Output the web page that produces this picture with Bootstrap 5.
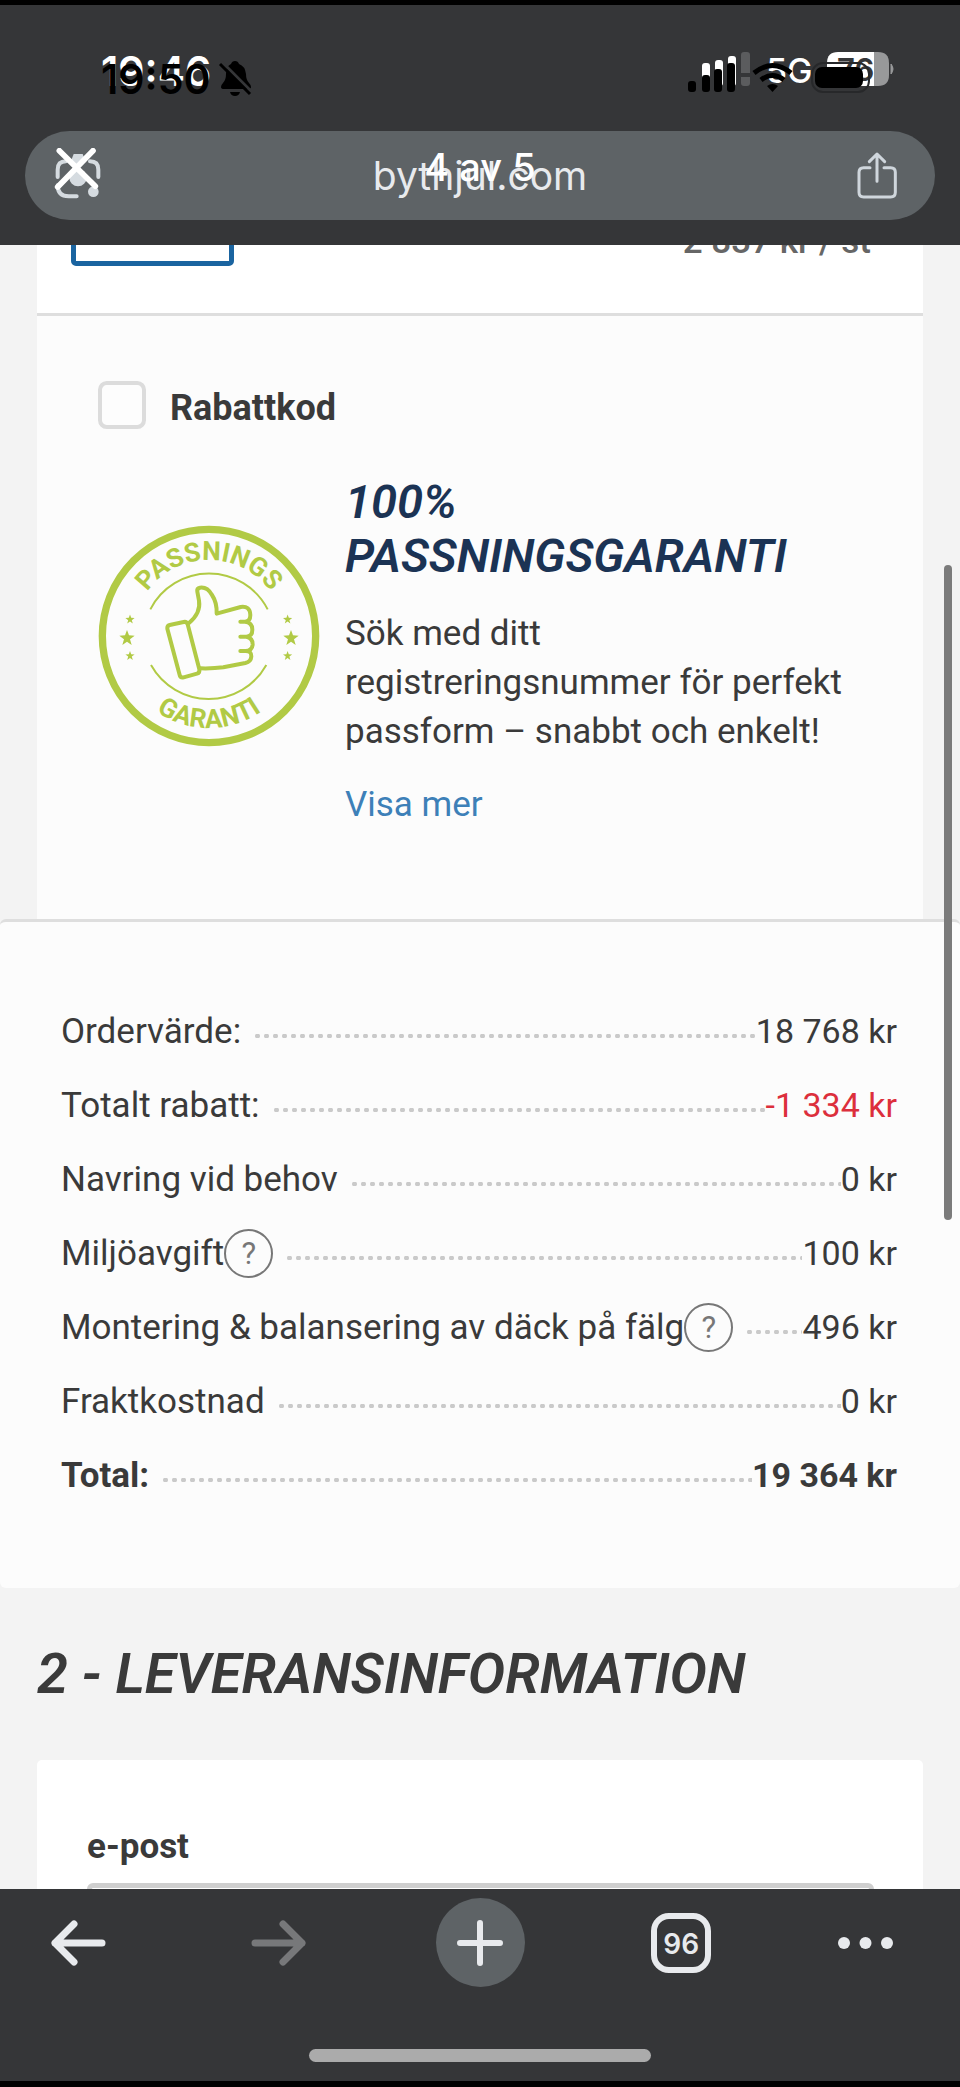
<!DOCTYPE html>
<html lang="sv">
<head>
<meta charset="utf-8">
<meta name="viewport" content="width=device-width, initial-scale=1">
<title>bythjul.com</title>
<link href="https://cdn.jsdelivr.net/npm/bootstrap@5.3.0/dist/css/bootstrap.min.css" rel="stylesheet">
<style>
  body { font-family: Roboto, "Liberation Sans", sans-serif; font-size: 35px; line-height: 49px; color: #3a3a3a; background: #f3f3f3; }
  svg { display: block; flex: none; }
  .chrome { background: #353638; font-family: Inter, "Liberation Sans", sans-serif; }
  .topbar { border-top: 5px solid #000; padding: 42px 25px 25px; }
  .bottombar { border-bottom: 6px solid #000; }
  .stack { display: grid; }
  .stack > * { grid-area: 1 / 1; }
  .status { height: 84px; padding: 0 39px 0 76px; font-size: 41px; line-height: 48px; font-weight: 600; }
  .status-under { color: #fff; }
  .status-over { color: #000; padding-top: 8px; padding-right: 65px; }
  .address { height: 89px; border-radius: 45px; background: #5e6366; color: #e8eaed; font-size: 39px; line-height: 89px; }
  .counter { color: #fff; font-size: 38px; line-height: 72px; font-weight: 500; }
  .plain { background: none; border: 0; padding: 0; color: inherit; }
  .side { margin: 0 37px; }
  .item { background: #fff; height: 71px; padding: 0 52px 0 34px; border-bottom: 3px solid #dedede; overflow: hidden; }
  .qty { width: 163px; height: 60px; margin-top: -39px; border: 5px solid #1a64a0; border-radius: 5px; background: #fff; }
  .price { margin-top: -28px; color: #666; line-height: 49px; font-weight: 500; }
  .offer { background: #fcfcfc; padding: 60px 61px 90px; }
  .tick { width: 48px; height: 48px; margin: 0; border: 4px solid #dcdcdc; border-radius: 10px; flex: none; background-color: #fdfdfd; }
  .gap-label { gap: 24px; }
  .offer label { font-size: 36px; }
  .pitch { gap: 25px; margin-top: 42px; }
  .pitch h3 { font-size: 47px; line-height: 54px; font-weight: 600; font-style: italic; color: #1b3354; margin: 0 0 26px; }
  .pitch p { margin: 0 0 24px; }
  .pitch a { color: #3d80b8; text-decoration: none; }
  .seal { margin-top: 50px; }
  .summary { background: #fcfcfc; border-top: 3px solid #dedede; border-radius: 6px; padding: 72px 63px 76px 61px; margin: 0; }
  .line-row { height: 74px; }
  .line-row dt, .line-row dd { font-weight: inherit; margin: 0; white-space: nowrap; }
  .line-row dd { font-size: 34px; }
  .dots { height: 4px; margin: 10px 0 0 12px; background: radial-gradient(circle, #cacaca 2px, transparent 3px) left center / 9px 4px repeat-x; }
  .help { width: 49px; height: 49px; border: 2px solid #777; border-radius: 50%; color: #777; font-size: 31px; line-height: 45px; font-weight: 400; flex: none; }
  .minus { color: #dc2f3c; }
  h2.step { font-size: 56px; line-height: 68px; font-weight: 600; font-style: italic; margin: 0; padding: 52px 37px; }
  .form-box { background: #fff; border-radius: 5px 5px 0 0; padding: 62px 49px 0 50px; height: 128px; overflow: hidden; }
  .form-box label { display: block; }
  .form-box input { margin-top: 12px; border: 5px solid #cfcfcf; border-radius: 6px; width: 100%; height: 80px; }
  .scrollmark { position: absolute; right: 8px; top: 320px; width: 8px; height: 655px; border-radius: 4px; background: #7b7b7b; }
  .tools { padding: 9px 33px 0; color: #e8eaed; }
  .tool { width: 89px; height: 89px; display: flex; align-items: center; justify-content: center; }
  .tool-new { background: #5e6366; border-radius: 50%; }
  .tabs-count { width: 60px; height: 60px; border: 6px solid #e8eaed; border-radius: 18px; font-size: 28px; line-height: 50px; font-weight: 600; }
  .homebar { width: 342px; height: 13px; border-radius: 7px; background: #ababab; margin: 62px auto 19px; }
</style>
</head>
<body class="d-flex flex-column min-vh-100">

<header class="chrome topbar">
  <div class="stack">
    <div class="status status-under d-flex justify-content-between">
      <span>19:46</span>
      <svg width="196" height="48" viewBox="700 47 196 48">
        <g fill="#fff"><rect x="702" y="63" width="8" height="23" rx="3"/><rect x="715" y="60" width="8" height="26" rx="3"/><rect x="728" y="56" width="8" height="30" rx="3"/></g>
        <path d="M741 55q0-3 3-3h3q3 0 3 3v18h-9zM741 77h9v6q0 3-3 3h-3q-3 0-3-3z" fill="#5b5c5e"/>
        <text x="766" y="83" font-size="34" font-weight="500" fill="#fff">5G</text>
        <path d="M874 52h4q11 0 11 11v12q0 11-11 11h-4z" fill="#98999a"/>
        <path d="M838 52h36v34h-36q-11 0-11-11V63q0-11 11-11z" fill="#fff"/>
        <path d="M891 64q4 5 0 10z" fill="#98999a" stroke="#98999a"/>
        <text x="837" y="81" font-size="31" font-weight="600" fill="#353638">76</text>
      </svg>
    </div>
    <div class="status status-over d-flex justify-content-between">
      <span class="d-flex gap-2"><span>19:50</span>
        <svg width="34" height="48" viewBox="217 54 34 48"><path d="M220 86q0-2 2-4 3-3 3-9 0-8 5-10 1-3 4-3t4 3q6 2 7 10 0 6 3 9 2 2 2 4 0 2-3 2h-24q-3 0-3-2zM229 91h10q-1 4-5 4t-5-4z" fill="#000"/><path d="M221 61l30 30" stroke="#353638" stroke-width="3"/><path d="M219 63l30 30" stroke="#000" stroke-width="3"/></svg>
      </span>
      <svg width="183" height="48" viewBox="687 55 183 48">
        <rect x="688" y="81" width="8" height="11" rx="3"/><rect x="702" y="75" width="8" height="17" rx="3"/><rect x="714" y="69" width="8" height="23" rx="3"/><rect x="727" y="63" width="8" height="29" rx="3"/>
        <g fill="none" stroke="#000" stroke-width="5"><path d="M754 73q18.500-15 37 0M761 80q11.500-9 23 0"/></g><path d="M767 86q5.500-4 11 0l-5.500 6z"/>
        <rect x="812" y="63" width="57" height="29" rx="11" fill="none" stroke="#27282a" stroke-width="2"/><rect x="815" y="67" width="48" height="21" rx="7"/>
      </svg>
    </div>
  </div>
  <div class="address stack">
    <div class="d-flex justify-content-between align-items-center px-4">
      <button class="plain ms-1" type="button" aria-label="Stäng">
        <svg width="50" height="56" viewBox="159 441 150 168" fill="none" stroke-linecap="round"><g stroke="#d5dbe0" stroke-width="12"><path d="M173 528v-22q0-25 25-25M270 481q25 0 25 25v22M173 553q0 33 33 33h24"/></g><circle cx="234" cy="530" r="26" fill="#d5dbe0"/><path d="M213 480l8-21h27l8 21-22 26z" fill="#d5dbe0"/><circle cx="280" cy="572" r="16" fill="#d5dbe0"/><path d="M178 449L286 556M279 449L173 558" stroke="#fff" stroke-width="17"/></svg>
      </button>
      <button class="plain me-2" type="button" aria-label="Dela">
        <svg width="52" height="56" viewBox="1113 445 156 168" fill="none" stroke="#cfd6dc" stroke-width="9" stroke-linecap="round" stroke-linejoin="round"><path d="M1170 504h-19q-14 0-14 14v60q0 14 14 14h81q14 0 14-14v-60q0-14-14-14h-20M1191 545v-82M1168 486l23-23 23 23"/></svg>
      </button>
    </div>
    <span class="mx-auto">bythjul.com</span>
    <span class="counter mx-auto">4 av 5</span>
  </div>
</header>

<main class="flex-grow-1 d-flex flex-column position-relative overflow-hidden">
  <section class="side">
    <div class="item d-flex justify-content-between align-items-start">
      <input class="qty" type="text" aria-label="Antal">
      <span class="price">2 837 kr / st</span>
    </div>
    <div class="offer">
      <div class="d-flex align-items-center gap-label">
        <input class="tick form-check-input" type="checkbox" id="rabatt">
        <label class="fw-bold pt-2" for="rabatt">Rabattkod</label>
      </div>
      <div class="pitch d-flex align-items-start">
        <svg class="seal" width="222" height="222" viewBox="54 72 666 666" fill="none" stroke="#b1ca45" role="img" aria-label="Passningsgaranti">
          <defs>
            <path id="arcTop" d="M159 405a228 228 0 0 1 456 0"/>
            <path id="arcLow" d="M111 405a276 276 0 0 0 552 0"/>
            <path id="star" d="M0-24L6-8 23-7 9 4 14 21 0 11-14 21-9 4-23-7-6-8z"/>
          </defs>
          <circle cx="387" cy="405" r="320" stroke-width="22"/>
          <g fill="#b1ca45" stroke="none" font-family="Roboto, sans-serif" font-weight="700" font-size="79" text-anchor="middle">
            <text><textPath href="#arcTop" startOffset="50%">PASSNINGS</textPath></text>
            <text><textPath href="#arcLow" startOffset="50%">GARANTI</textPath></text>
            <use href="#star" x="141" y="411"/><use href="#star" x="633" y="411"/>
            <g transform="scale(.6)"><use href="#star" x="250" y="592"/><use href="#star" x="250" y="774"/><use href="#star" x="1038" y="592"/><use href="#star" x="1038" y="774"/></g>
          </g>
          <path d="M211 325A198 198 0 0 1 563 325M213 492A198 198 0 0 0 559 492" stroke-width="6"/>
          <g stroke-width="12" stroke-linejoin="round" stroke-linecap="round">
            <path d="M269 372l42-9q9-2 12 7l35 135q2 10-7 13l-40 11q-10 2-12-7L262 383q-1-9 7-11z"/>
            <path d="M327 366q36-30 30-67l-5-27q-2-10 8-12 22-3 36 22 15 22 14 56l72-20q28-4 29 24 0 20-16 20h-14M495 362q22 2 22 24 0 20-18 21h-18M499 407q20 4 19 24-2 18-21 19h-16M497 450q18 0 17 16-1 16-18 20l-66 13q-30 4-69 3"/>
          </g>
        </svg>
        <div>
          <h3>100%<br>PASSNINGSGARANTI</h3>
          <p>Sök med ditt<br>registreringsnummer för perfekt<br>passform – snabbt och enkelt!</p>
          <a href="#">Visa mer</a>
        </div>
      </div>
    </div>
  </section>

  <dl class="summary">
    <div class="line-row d-flex align-items-center"><dt>Ordervärde:</dt><span class="dots flex-grow-1"></span><dd>18 768 kr</dd></div>
    <div class="line-row d-flex align-items-center"><dt>Totalt rabatt:</dt><span class="dots flex-grow-1"></span><dd class="minus">-1 334 kr</dd></div>
    <div class="line-row d-flex align-items-center"><dt>Navring vid behov</dt><span class="dots flex-grow-1"></span><dd>0 kr</dd></div>
    <div class="line-row d-flex align-items-center"><dt>Miljöavgift</dt><button class="plain help" type="button">?</button><span class="dots flex-grow-1"></span><dd>100 kr</dd></div>
    <div class="line-row d-flex align-items-center"><dt>Montering &amp; balansering av däck på fälg</dt><button class="plain help" type="button">?</button><span class="dots flex-grow-1"></span><dd>496 kr</dd></div>
    <div class="line-row d-flex align-items-center"><dt>Fraktkostnad</dt><span class="dots flex-grow-1"></span><dd>0 kr</dd></div>
    <div class="line-row d-flex align-items-center fw-bold"><dt>Total:</dt><span class="dots flex-grow-1"></span><dd>19 364 kr</dd></div>
  </dl>

  <h2 class="step">2 - LEVERANSINFORMATION</h2>
  <form class="side form-box flex-grow-1">
    <label class="fw-bold" for="epost">e-post</label>
    <input type="email" id="epost">
  </form>
  <div class="scrollmark"></div>
</main>

<footer class="chrome bottombar">
  <nav class="tools d-flex justify-content-between">
    <button class="plain tool" type="button" aria-label="Bakåt"><svg width="56" height="48" viewBox="0 0 56 48" fill="none" stroke="currentColor" stroke-width="7" stroke-linecap="round" stroke-linejoin="round"><path d="M24 5L5 24l19 19M5 24h47"/></svg></button>
    <button class="plain tool" type="button" aria-label="Framåt"><svg width="56" height="48" viewBox="0 0 56 48" fill="none" stroke="#77787a" stroke-width="7" stroke-linecap="round" stroke-linejoin="round"><path d="M32 5l19 19-19 19M51 24H4"/></svg></button>
    <button class="plain tool tool-new" type="button" aria-label="Ny flik"><svg width="46" height="46" viewBox="0 0 46 46" stroke="currentColor" stroke-width="6" stroke-linecap="round"><path d="M23 3v40M3 23h40"/></svg></button>
    <button class="plain tool" type="button"><span class="tabs-count">96</span></button>
    <button class="plain tool justify-content-start" type="button" aria-label="Mer"><svg width="55" height="12" viewBox="0 0 55 12" fill="currentColor"><circle cx="6" cy="6" r="6"/><circle cx="27.500" cy="6" r="6"/><circle cx="49" cy="6" r="6"/></svg></button>
  </nav>
  <div class="homebar"></div>
</footer>
<script src="https://cdn.jsdelivr.net/npm/bootstrap@5.3.0/dist/js/bootstrap.bundle.min.js"></script>
</body>
</html>
